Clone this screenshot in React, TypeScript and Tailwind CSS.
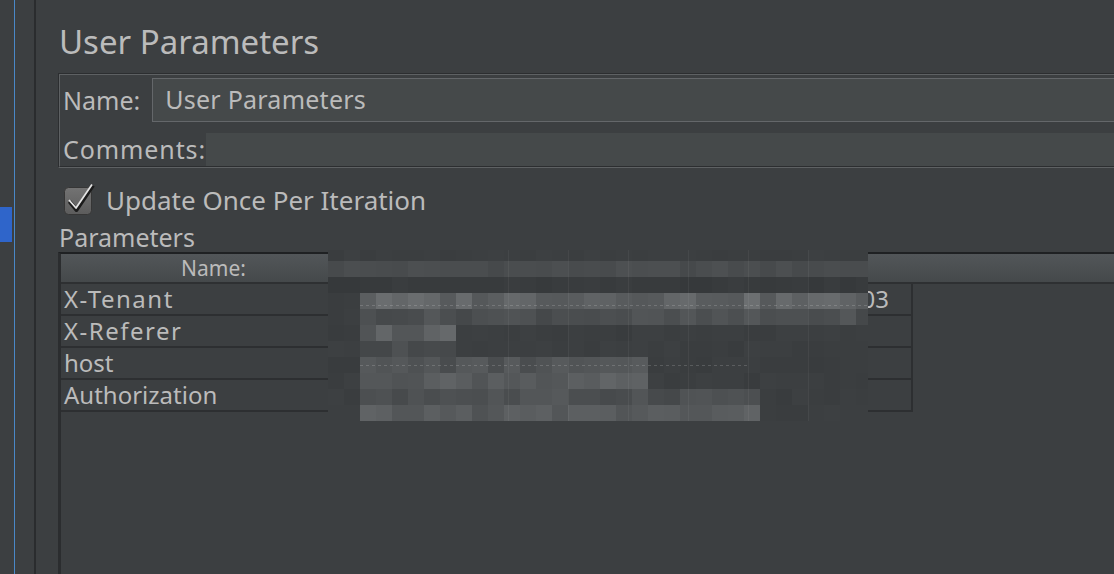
import React from "react";

// pixelated (redacted) block that covers the values column
const bands = [
  { y: 0, h: 11, lo: 0x3a, hi: 0x3d },
  { y: 11, h: 16, lo: 0x46, hi: 0x4d },
  { y: 27, h: 16, lo: 0x36, hi: 0x3a },
  { y: 43, h: 16, x0: 360, x1: 868, lo: 0x54, hi: 0x6c },
  { y: 59, h: 16, x0: 360, x1: 868, lo: 0x45, hi: 0x54 },
  { y: 75, h: 16, x0: 360, x1: 448, lo: 0x4e, hi: 0x68 },
  { y: 91, h: 16, x0: 360, x1: 448, lo: 0x44, hi: 0x50 },
  { y: 107, h: 16, x0: 360, x1: 645, lo: 0x48, hi: 0x58 },
  { y: 123, h: 16, x0: 360, x1: 645, lo: 0x50, hi: 0x62 },
  { y: 139, h: 16, x0: 360, x1: 748, lo: 0x45, hi: 0x56 },
  { y: 155, h: 16, x0: 360, x1: 748, lo: 0x4e, hi: 0x60 },
];

const rnd = (i: number, j: number) => {
  const s = Math.sin(i * 12.9898 + j * 78.233) * 43758.5453;
  return s - Math.floor(s);
};

const shade = (v: number) => `rgb(${v},${v + 3},${v + 5})`;

function Mosaic() {
  const rects: React.ReactNode[] = [];
  bands.forEach((b, j) => {
    for (let c = 0; c < 34; c++) {
      const ax = 328 + c * 16;
      const inLight = b.x0 === undefined || (ax >= b.x0 && ax < b.x1!);
      const lo = inLight ? b.lo : 0x39;
      const hi = inLight ? b.hi : 0x3d;
      const v = Math.round(lo + rnd(c, j) * (hi - lo));
      rects.push(<rect key={`${j}-${c}`} x={c * 16} y={b.y} width={16} height={b.h} fill={shade(v)} />);
    }
  });
  return (
    <svg width="540" height="171" viewBox="0 0 540 171" className="block">
      {rects}
      {[180, 240, 300, 360, 420, 480].map((x) => (
        <line key={x} x1={x + 0.5} y1={0} x2={x + 0.5} y2={171} stroke="rgba(255,255,255,0.05)" />
      ))}
      <line x1={32} y1={55.5} x2={540} y2={55.5} stroke="rgba(255,255,255,0.16)" strokeDasharray="3 3" />
      <line x1={32} y1={115.5} x2={420} y2={115.5} stroke="rgba(255,255,255,0.16)" strokeDasharray="3 3" />
    </svg>
  );
}

function CheckBox() {
  return (
    <svg width="32" height="32" viewBox="0 -3 32 32" className="overflow-visible">
      <defs>
        <linearGradient id="cb" x1="0" y1="0" x2="0" y2="1">
          <stop offset="0" stopColor="#737373" />
          <stop offset="1" stopColor="#5c5c5c" />
        </linearGradient>
      </defs>
      <rect x="0.5" y="0.5" width="27" height="27" rx="4" fill="url(#cb)" stroke="#363636" />
      <path d="M5.5 14.5 L12.5 23 L29 -1.5" fill="none" stroke="#1b1b1b" strokeWidth="4" strokeLinejoin="round" />
      <path d="M5 13 L12 21 L28 -2.5" fill="none" stroke="#e4e4e4" strokeWidth="1.8" strokeLinejoin="round" />
    </svg>
  );
}

const rows = [
  { name: "X-Tenant", value: "03", wide: true },
  { name: "X-Referer", value: "", wide: true },
  { name: "host", value: "", wide: false },
  { name: "Authorization", value: "", wide: false },
];

export default function App() {
  return (
    <div className="flex h-[574px] w-[1114px] overflow-hidden bg-[#3c3f41] font-['Noto_Sans',sans-serif] text-[#bbbbbb]">
      {/* ── Left tree gutter ── */}
      <div className="w-[14px] shrink-0">
        <div className="mt-[207px] h-[35px] w-[12px] bg-[#2f65ca]" />
      </div>
      <div className="w-px shrink-0 bg-[#4a88c7]" />
      <div className="w-[19px] shrink-0" />
      <div className="w-[2px] shrink-0 bg-[#2a2c2e]" />

      {/* ── Main panel ── */}
      <div className="flex min-w-0 flex-1 flex-col pl-[22px]">
        <div className="ml-px mt-[22px] text-[33px] leading-[40px]">User Parameters</div>

        {/* Name / Comments */}
        <div className="mt-[11px] border-b border-l border-t border-b-[#5e6163] border-l-[#2c2e30] border-t-[#2c2e30]">
          <div className="border-b border-l border-t border-b-[#2c2e30] border-l-[#5e6163] border-t-[#5e6163] pl-[3px] pt-[3px]">
            <div className="flex h-[44px] items-center">
              <span className="text-[25px] leading-none">Name:</span>
              <div className="ml-[12px] flex h-[44px] flex-1 items-center border border-r-0 border-[#64676a] bg-[#45494a] pl-[12px] text-[25px] tracking-[0.25px]">
                User Parameters
              </div>
            </div>
            <div className="mt-[11px] flex h-[33px] items-center">
              <span className="w-[143px] text-[25px] leading-none tracking-[0.9px]">Comments:</span>
              <div className="h-[33px] flex-1 bg-[#45494a]" />
            </div>
          </div>
        </div>

        {/* Update once */}
        <div className="mt-[17px] flex h-[30px] items-center">
          <div className="ml-[6px] flex h-[28px] w-[28px] items-center">
            <CheckBox />
          </div>
          <span className="ml-[14px] text-[26px] leading-none">Update Once Per Iteration</span>
        </div>

        <div className="ml-px mt-[7px] h-[30px] text-[25px] leading-[30px]">Parameters</div>

        {/* Table */}
        <div className="relative flex flex-1 flex-col border-l-[3px] border-t-2 border-l-[#2b2d2f] border-t-[#1f2123]">
          <div className="flex h-[30px] shrink-0 border-b-2 border-[#2e3032] bg-gradient-to-b from-[#525659] to-[#45494b]">
            <div className="flex w-[303px] items-center justify-center pl-[2px] text-[21px] leading-none">Name:</div>
          </div>
          {rows.map((r) => (
            <div key={r.name} className="flex h-[32px] w-[852px] border-b-2 border-[#2d2f31]">
              <div
                className={
                  r.wide
                    ? "flex w-[303px] items-center pl-[3px] text-[24px] leading-none tracking-[1.5px]"
                    : "flex w-[303px] items-center pl-[3px] text-[24px] leading-none"
                }
              >
                {r.name}
              </div>
              <div className="flex flex-1 items-center justify-end border-r-2 border-[#2d2f31] pr-[22px] text-[24px] leading-none">
                {r.value}
              </div>
            </div>
          ))}
          <div className="absolute left-[267px] top-[-4px]">
            <Mosaic />
          </div>
        </div>
      </div>
    </div>
  );
}
